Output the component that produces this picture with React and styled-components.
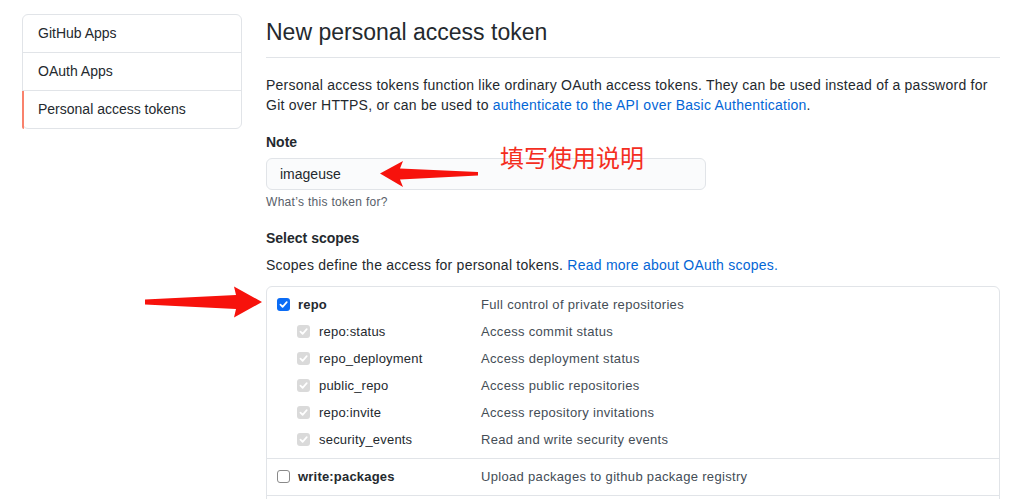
import { styled, createGlobalStyle } from "styled-components";

const GlobalStyle = createGlobalStyle`
  body {
    margin: 0;
    background: #fff;
    font-family: "Liberation Sans", Arial, sans-serif;
    color: #24292e;
  }
`;

const Page = styled.div`
  position: relative;
  display: flex;
  gap: 24px;
  padding: 14px 0 0 22px;
  width: 1032px;
  height: 499px;
  box-sizing: border-box;
  overflow: hidden;
`;

const Menu = styled.nav`
  width: 220px;
  height: fit-content;
  border: 1px solid #e1e4e8;
  border-radius: 6px;
  box-sizing: border-box;
`;

const MenuItem = styled.div`
  position: relative;
  height: 37px;
  line-height: 37px;
  padding-left: 15px;
  font-size: 14px;
  color: #24292e;
  border-bottom: ${(p) => (p.$last ? "none" : "1px solid #e1e4e8")};

  &::before {
    content: "";
    display: ${(p) => (p.$active ? "block" : "none")};
    position: absolute;
    left: -1px;
    top: 0;
    bottom: -1px;
    width: 2px;
    background: #f9826c;
    border-bottom-left-radius: 6px;
  }
`;

const Main = styled.main`
  width: 734px;
`;

const Header = styled.div`
  margin-top: 3px;
  padding-bottom: 10px;
  border-bottom: 1px solid #e1e4e8;
`;

const Title = styled.h2`
  margin: 0;
  font-size: 23px;
  line-height: 30px;
  font-weight: 400;
`;

const Text = styled.p`
  margin: ${(p) => p.$margin || "0"};
  font-size: 14px;
  line-height: 20px;
  letter-spacing: 0.24px;
`;

const Link = styled.a`
  color: #0366d6;
  text-decoration: none;
`;

const Label = styled.div`
  margin-top: ${(p) => p.$top || "17px"};
  font-size: 14px;
  line-height: 20px;
  font-weight: 700;
`;

const Input = styled.div`
  margin-top: 6px;
  width: 440px;
  height: 32px;
  line-height: 30px;
  box-sizing: border-box;
  padding: 0 13px;
  font-size: 14px;
  background: #fafbfc;
  border: 1px solid #e1e4e8;
  border-radius: 6px;
`;

const Note = styled.div`
  margin-top: 3px;
  font-size: 12px;
  line-height: 18px;
  letter-spacing: 0.3px;
  color: #586069;
`;

const ScopeBox = styled.div`
  margin-top: 11px;
  border: 1px solid #e1e4e8;
  border-radius: 6px;
`;

const Group = styled.div`
  padding: 4px 0 5px;
  border-bottom: 1px solid #e1e4e8;
`;

const GroupRest = styled.div`
  height: 20px;
`;

const Row = styled.div`
  display: grid;
  grid-template-columns: 204px 1fr;
  align-items: center;
  height: 27px;
  padding-left: 10px;
  font-size: 13px;
`;

const ScopeName = styled.div`
  display: flex;
  align-items: center;
  gap: ${(p) => (p.$sub ? "9px" : "8px")};
  padding-left: ${(p) => (p.$sub ? "20px" : "0")};
  font-weight: ${(p) => (p.$sub ? 400 : 700)};
  letter-spacing: 0.2px;
  color: #24292e;
`;

const ScopeDesc = styled.div`
  color: #444d56;
  letter-spacing: 0.32px;
`;

const Box = styled.span`
  display: inline-flex;
  align-items: center;
  justify-content: center;
  flex-shrink: 0;
  width: 13px;
  height: 13px;
  box-sizing: border-box;
  border-radius: 3px;
  background: ${(p) =>
    p.$state === "on" ? "#0b6cf5" : p.$state === "dim" ? "#dadada" : "#fff"};
  border: ${(p) => (p.$state === "off" ? "1px solid #8a8a8a" : "none")};
`;

const Annotation = styled.div`
  position: absolute;
  left: 500px;
  top: 143px;
  font-family: "Noto Sans CJK SC", sans-serif;
  font-size: 24px;
  line-height: 28px;
  color: #f42e1f;
`;

const ArrowSvg = styled.svg`
  position: absolute;
  left: ${(p) => p.$x}px;
  top: ${(p) => p.$y}px;
`;

const Check = ({ state }) => (
  <Box $state={state}>
    {state !== "off" && (
      <svg width="9" height="9" viewBox="0 0 10 10">
        <path
          d="M1.6 5.2 L4 7.6 L8.6 2.4"
          fill="none"
          stroke="#fff"
          strokeWidth="1.9"
          strokeLinecap="round"
          strokeLinejoin="round"
        />
      </svg>
    )}
  </Box>
);

const subScopes = [
  ["repo:status", "Access commit status"],
  ["repo_deployment", "Access deployment status"],
  ["public_repo", "Access public repositories"],
  ["repo:invite", "Access repository invitations"],
  ["security_events", "Read and write security events"],
];

export default function App() {
  return (
    <>
      <GlobalStyle />
      <Page>
        <Menu>
          <MenuItem>GitHub Apps</MenuItem>
          <MenuItem>OAuth Apps</MenuItem>
          <MenuItem $active $last>
            Personal access tokens
          </MenuItem>
        </Menu>
        <Main>
          <Header>
            <Title>New personal access token</Title>
          </Header>
          <Text $margin="17px 0 0">
            Personal access tokens function like ordinary OAuth access tokens. They can be used
            instead of a password for Git over HTTPS, or can be used to{" "}
            <Link href="#">authenticate to the API over Basic Authentication</Link>.
          </Text>
          <Label>Note</Label>
          <Input>imageuse</Input>
          <Note>What’s this token for?</Note>
          <Label>Select scopes</Label>
          <Text $margin="7px 0 0">
            Scopes define the access for personal tokens.{" "}
            <Link href="#">Read more about OAuth scopes.</Link>
          </Text>
          <ScopeBox>
            <Group>
              <Row>
                <ScopeName>
                  <Check state="on" />
                  repo
                </ScopeName>
                <ScopeDesc>Full control of private repositories</ScopeDesc>
              </Row>
              {subScopes.map(([name, desc]) => (
                <Row key={name}>
                  <ScopeName $sub>
                    <Check state="dim" />
                    {name}
                  </ScopeName>
                  <ScopeDesc>{desc}</ScopeDesc>
                </Row>
              ))}
            </Group>
            <Group>
              <Row>
                <ScopeName>
                  <Check state="off" />
                  write:packages
                </ScopeName>
                <ScopeDesc>Upload packages to github package registry</ScopeDesc>
              </Row>
            </Group>
            <GroupRest />
          </ScopeBox>
        </Main>

        <Annotation>填写使用说明</Annotation>
        <ArrowSvg $x={375} $y={157} width="108" height="34" viewBox="375 157 108 34">
          <polygon
            points="380,173.5 403,161 400,168.5 478,172 478,175.5 400,179.5 403,187"
            fill="#f7120c"
          />
        </ArrowSvg>
        <ArrowSvg $x={140} $y={283} width="125" height="38" viewBox="140 283 125 38">
          <polygon
            points="145,299.5 236,295 234,286.5 262,302 234,317.5 236,309 145,304.5"
            fill="#f7120c"
          />
        </ArrowSvg>
      </Page>
    </>
  );
}
